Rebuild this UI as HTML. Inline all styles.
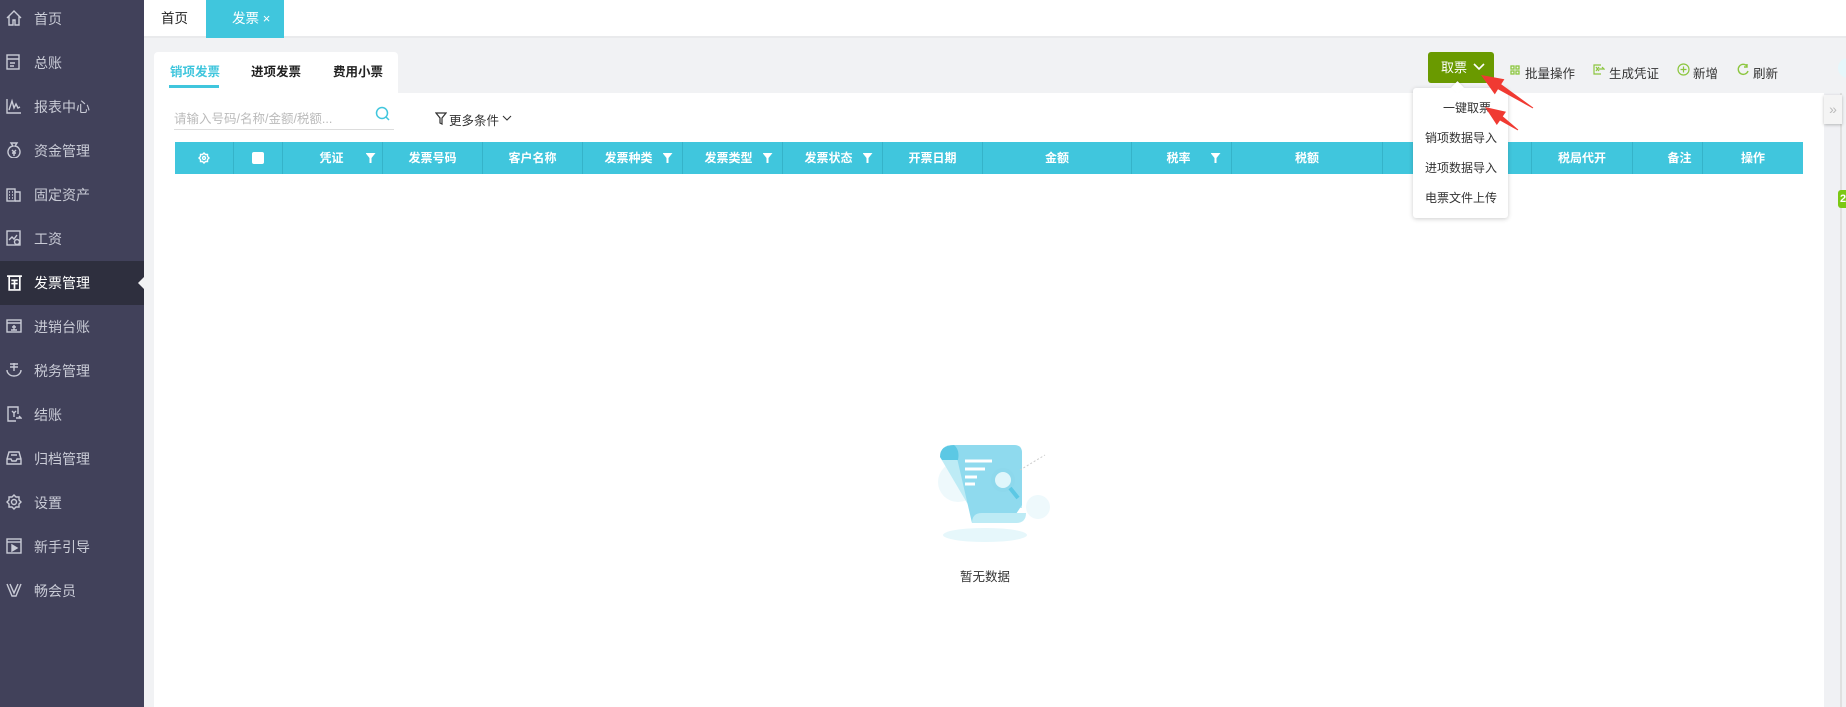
<!DOCTYPE html>
<html><head><meta charset="utf-8"><style>
*{margin:0;padding:0;box-sizing:border-box}
body{width:1846px;height:707px;overflow:hidden;background:#f1f2f4;font-family:"Liberation Sans","Noto Sans CJK SC",sans-serif;position:relative}
.a{position:absolute}
#side{left:0;top:0;width:144px;height:707px;background:#41415a}
.it{position:absolute;left:0;width:144px;height:44px;color:#c9cbd6;font-size:14px;line-height:44px;padding-left:34px}
.it svg{position:absolute;left:6px;top:13px}
.act{background:#2e2f3e;color:#fff}
.hc{position:absolute;top:142px;height:32px;line-height:32px;color:#fff;font-size:12px;font-weight:bold;text-align:center;border-right:1px solid #35b3c9}
.fi{display:inline-block;width:10px;height:10px;margin-left:10px;vertical-align:-1px;background:#fff;clip-path:polygon(0 0,100% 0,60% 50%,60% 100%,40% 100%,40% 50%)}
.tb{position:absolute;top:63px;font-size:12.5px;color:#333}
.dd{position:absolute;left:0;width:96px;text-align:center;font-size:12px;color:#333}
</style></head><body>
<div id="side" class="a">
<div class="it" style="top:-3px"><svg width="16" height="16" viewBox="0 0 16 16" fill="none" stroke="#c9cbd6" stroke-width="1.4"><path d="M1 8L8 1l7 7M3 6v9h4v-5h2v5h4V6"/></svg>首页</div>
<div class="it" style="top:41px"><svg width="16" height="16" viewBox="0 0 16 16" fill="none" stroke="#c9cbd6" stroke-width="1.4"><rect x="1" y="1" width="12" height="14"/><path d="M1 5h12M4 9h5M4 12h4"/></svg>总账</div>
<div class="it" style="top:85px"><svg width="16" height="16" viewBox="0 0 16 16" fill="none" stroke="#c9cbd6" stroke-width="1.4"><path d="M1 1v14h14M3 12l3-9 2 7 2-4 2 4 2-1"/></svg>报表中心</div>
<div class="it" style="top:129px"><svg width="16" height="16" viewBox="0 0 16 16" fill="none" stroke="#c9cbd6" stroke-width="1.4"><path d="M5 1h6l-2 3h0a6 6 0 1 1-2 0z"/><path d="M6 8l2 2 2-2M8 10v4M6 11h4"/></svg>资金管理</div>
<div class="it" style="top:173px"><svg width="16" height="16" viewBox="0 0 16 16" fill="none" stroke="#c9cbd6" stroke-width="1.4"><rect x="1" y="3" width="8" height="12"/><path d="M9 6h5v9H9M3 6h1M6 6h1M3 9h1M6 9h1M3 12h1M6 12h1"/></svg>固定资产</div>
<div class="it" style="top:217px"><svg width="16" height="16" viewBox="0 0 16 16" fill="none" stroke="#c9cbd6" stroke-width="1.4"><rect x="1" y="1" width="13" height="14"/><path d="M3 10l3-3 2 2 3-4"/><circle cx="11" cy="12" r="2.5"/></svg>工资</div>
<div class="it act" style="top:261px"><svg width="17" height="17" viewBox="0 0 16 16" fill="none" stroke="#fff" stroke-width="1.6"><path d="M1 2h14M3 2v13h10V2M5 6h6M5 9h6M8 6v8"/></svg>发票管理</div>
<div class="a" style="left:138px;top:277px;width:0;height:0;border-top:6px solid transparent;border-bottom:6px solid transparent;border-right:6px solid #f1f2f4"></div>
<div class="it" style="top:305px"><svg width="16" height="16" viewBox="0 0 16 16" fill="none" stroke="#c9cbd6" stroke-width="1.4"><rect x="1" y="2" width="14" height="12"/><path d="M1 5h14M5 12h6M8 7v5M6 9h4"/></svg>进销台账</div>
<div class="it" style="top:349px"><svg width="16" height="16" viewBox="0 0 16 16" fill="none" stroke="#c9cbd6" stroke-width="1.4"><path d="M1 8a7 6 0 0 0 14 0M4 2h8M4 5h8M8 1v8"/></svg>税务管理</div>
<div class="it" style="top:393px"><svg width="16" height="16" viewBox="0 0 16 16" fill="none" stroke="#c9cbd6" stroke-width="1.4"><path d="M12 8V1H2v14h8"/><path d="M10 12h5l-2-2M6 5l2 2 2-2M8 7v4"/></svg>结账</div>
<div class="it" style="top:437px"><svg width="16" height="16" viewBox="0 0 16 16" fill="none" stroke="#c9cbd6" stroke-width="1.4"><path d="M3 2h10l2 7v5H1V9zM1 9h4l1 2h4l1-2h4M5 5h6"/></svg>归档管理</div>
<div class="it" style="top:481px"><svg width="16" height="16" viewBox="0 0 16 16" fill="none" stroke="#c9cbd6" stroke-width="1.4"><path d="M8 1l2 2h3v3l2 2-2 2v3h-3l-2 2-2-2H3v-3L1 8l2-2V3h3z"/><circle cx="8" cy="8" r="2.5"/></svg>设置</div>
<div class="it" style="top:525px"><svg width="16" height="16" viewBox="0 0 16 16" fill="none" stroke="#c9cbd6" stroke-width="1.4"><rect x="1" y="1" width="14" height="14"/><path d="M1 4h14"/><path d="M6 7v6l5-3z" fill="#c9cbd6"/></svg>新手引导</div>
<div class="it" style="top:569px"><svg width="16" height="16" viewBox="0 0 16 16" fill="none" stroke="#c9cbd6" stroke-width="1.4"><path d="M1 2l5 12h4l5-12M4 2l4 9 4-9"/></svg>畅会员</div>
</div>

<div class="a" style="left:144px;top:0;width:1702px;height:38px;background:#fff;border-bottom:2px solid #e9eaec"></div>
<div class="a" style="left:161px;top:0;line-height:38px;font-size:13.5px;color:#222">首页</div>
<div class="a" style="left:206px;top:0;width:78px;height:38px;background:#40c6dd;color:#fff;font-size:13.5px;line-height:38px;padding-left:26px">发票 <span style="font-size:13px">×</span></div>

<div class="a" style="left:154px;top:52px;width:244px;height:42px;background:#fff;border-radius:4px 4px 0 0"></div>
<div class="a" style="left:170px;top:61px;font-size:12.5px;font-weight:bold;color:#40c6dd">销项发票</div>
<div class="a" style="left:169px;top:85px;width:50px;height:3px;background:#40c6dd"></div>
<div class="a" style="left:251px;top:61px;font-size:12.5px;font-weight:bold;color:#222">进项发票</div>
<div class="a" style="left:333px;top:61px;font-size:12.5px;font-weight:bold;color:#222">费用小票</div>

<div class="a" style="left:154px;top:93px;width:1670px;height:614px;background:#fff"></div>
<div class="a" style="left:174px;top:108px;font-size:12.5px;color:#bbb">请输入号码/名称/金额/税额...</div>
<svg class="a" style="left:375px;top:106px" width="16" height="16" viewBox="0 0 16 16" fill="none" stroke="#40c6dd" stroke-width="1.5"><circle cx="7" cy="7" r="5.5"/><path d="M11 11l3 3"/></svg>
<div class="a" style="left:174px;top:129px;width:220px;height:1px;background:#ddd"></div>
<svg class="a" style="left:435px;top:112px" width="12" height="13" viewBox="0 0 12 13" fill="none" stroke="#333" stroke-width="1.2"><path d="M1 1h10L7 6v6L5 11V6z"/></svg>
<div class="a" style="left:449px;top:110px;font-size:12.5px;color:#333">更多条件</div>
<svg class="a" style="left:502px;top:115px" width="10" height="7" viewBox="0 0 10 7" fill="none" stroke="#333" stroke-width="1.1"><path d="M1 1l4 4 4-4"/></svg>

<div class="a" style="left:175px;top:142px;width:1628px;height:32px;background:#40c6dd"></div>
<div class="hc" style="left:175px;width:59px"><svg width="12" height="12" viewBox="0 0 12 12" fill="none" stroke="#fff" stroke-width="1.4" style="vertical-align:-2px"><path d="M6 1l1.5 1.5h2v2L11 6 9.5 7.5v2h-2L6 11 4.5 9.5h-2v-2L1 6l1.5-1.5v-2h2z"/><circle cx="6" cy="6" r="1.5"/></svg></div>
<div class="hc" style="left:234px;width:49px"><span style="display:inline-block;width:12px;height:12px;background:#fff;border-radius:2px;vertical-align:-2px"></span></div>
<div class="hc" style="left:283px;width:100px;padding-left:30px">凭证<i class="fi" style="margin-left:22px"></i></div>
<div class="hc" style="left:383px;width:100px">发票号码</div>
<div class="hc" style="left:483px;width:100px">客户名称</div>
<div class="hc" style="left:583px;width:100px;padding-left:12px">发票种类<i class="fi"></i></div>
<div class="hc" style="left:683px;width:100px;padding-left:12px">发票类型<i class="fi"></i></div>
<div class="hc" style="left:783px;width:100px;padding-left:12px">发票状态<i class="fi"></i></div>
<div class="hc" style="left:883px;width:100px">开票日期</div>
<div class="hc" style="left:983px;width:149px">金额</div>
<div class="hc" style="left:1132px;width:100px;padding-left:24px">税率<i class="fi" style="margin-left:20px"></i></div>
<div class="hc" style="left:1232px;width:151px">税额</div>
<div class="hc" style="left:1383px;width:149px"></div>
<div class="hc" style="left:1532px;width:101px">税局代开</div>
<div class="hc" style="left:1633px;width:70px;padding-left:24px">备注</div>
<div class="hc" style="left:1703px;width:100px;border:none">操作</div>

<svg class="a" style="left:930px;top:432px" width="122" height="110" viewBox="0 0 122 110">
<ellipse cx="55" cy="103" rx="42" ry="7" fill="#e6f7fb"/>
<circle cx="28" cy="50" r="20" fill="#eef9fc"/>
<circle cx="108" cy="75" r="12" fill="#eef9fc"/>
<path d="M10 25q0-12 14-12h60q8 0 8 8v55H40z" fill="#bdebf5"/>
<path d="M24 13h60q8 0 8 8v52l-12 18H42z" fill="#8fdaee"/>
<path d="M42 91h44q10 0 10-10H52q-10 0-10 10z" fill="#bdebf5"/>
<path d="M10 25q0-12 14-12 6 5 4 15H12z" fill="#5cc8e4"/>
<path d="M35 29h27M35 37h20M35 45h12M35 52h10" stroke="#fff" stroke-width="3"/>
<circle cx="73" cy="48" r="10" fill="#dff6fb" stroke="#8dd8ec" stroke-width="4"/>
<path d="M80 56l8 10" stroke="#5cc8e4" stroke-width="4"/>
<path d="M90 38l25-15" stroke="#ccc" stroke-dasharray="2 2"/>
</svg>
<div class="a" style="left:960px;top:566px;font-size:12.5px;color:#333">暂无数据</div>

<div class="a" style="left:1428px;top:52px;width:66px;height:31px;background:#6a9a00;border-radius:3px;color:#fff;font-size:13px;line-height:31px;padding-left:13px">取票<svg width="12" height="8" viewBox="0 0 12 8" fill="none" stroke="#fff" stroke-width="1.6" style="margin-left:6px;vertical-align:1px"><path d="M1 1l5 5 5-5"/></svg></div>
<svg class="a" style="left:1510px;top:65px" width="10" height="10" viewBox="0 0 10 10" fill="none" stroke="#8cc63f" stroke-width="1.3"><rect x="1" y="1" width="3" height="3"/><rect x="6" y="1" width="3" height="3"/><rect x="1" y="6" width="3" height="3"/><rect x="6" y="6" width="3" height="3"/></svg>
<div class="tb" style="left:1525px">批量操作</div>
<svg class="a" style="left:1593px;top:64px" width="12" height="11" viewBox="0 0 12 11" fill="none" stroke="#8cc63f" stroke-width="1.2"><path d="M8 1H1v9h7M3 3l3 4M6 3L3 7M6 5h5l-2-2"/></svg>
<div class="tb" style="left:1609px">生成凭证</div>
<svg class="a" style="left:1677px;top:63px" width="13" height="13" viewBox="0 0 13 13" fill="none" stroke="#8cc63f" stroke-width="1.2"><circle cx="6.5" cy="6.5" r="5.5"/><path d="M6.5 3.5v6M3.5 6.5h6"/></svg>
<div class="tb" style="left:1693px">新增</div>
<svg class="a" style="left:1737px;top:63px" width="12" height="13" viewBox="0 0 12 13" fill="none" stroke="#8cc63f" stroke-width="1.4"><path d="M10 3A5 5 0 1 0 11 8M10 1v3H7"/></svg>
<div class="tb" style="left:1753px">刷新</div>
<div class="a" style="left:1838px;top:58px;width:20px;height:20px;border-radius:50%;background:#e6f7fb"></div>

<div class="a" style="left:1824px;top:93px;width:16px;height:614px;background:#f0f1f4"></div>
<div class="a" style="left:1840px;top:93px;width:2px;height:614px;background:#e0e0e0"></div>
<div class="a" style="left:1824px;top:95px;width:18px;height:29px;background:#f4f4f4;box-shadow:0 1px 3px rgba(0,0,0,.25);color:#bbb;font-size:14px;line-height:28px;text-align:center">»</div>
<div class="a" style="left:1838px;top:190px;width:10px;height:18px;background:#7cc814;border-radius:3px 0 0 3px;color:#fff;font-size:11px;line-height:18px;padding-left:2px;font-weight:bold">2</div>

<div class="a" style="left:1413px;top:88px;width:95px;height:130px;background:#fff;border-radius:3px;box-shadow:0 1px 5px rgba(0,0,0,.2)">
<div class="a" style="left:40px;top:-5px;width:9px;height:9px;background:#fff;transform:rotate(45deg);box-shadow:-1px -1px 2px rgba(0,0,0,.08)"></div>
<div class="dd" style="top:11px;padding-left:12px">一键取票</div>
<div class="dd" style="top:41px">销项数据导入</div>
<div class="dd" style="top:71px">进项数据导入</div>
<div class="dd" style="top:101px">电票文件上传</div>
</div>

<svg class="a" style="left:0;top:0" width="1846" height="707">
<polygon fill="#f03a32" points="1481,75 1504.4,79.2 1501.2,84.3 1533.3,107.6 1532.7,108.4 1498,89.3 1494.8,94.4"/>
<polygon fill="#f03a32" points="1485,107 1506,111.8 1502.8,116.4 1518.3,129.6 1517.7,130.4 1500,120.5 1496.8,125"/>
</svg>
</body></html>
